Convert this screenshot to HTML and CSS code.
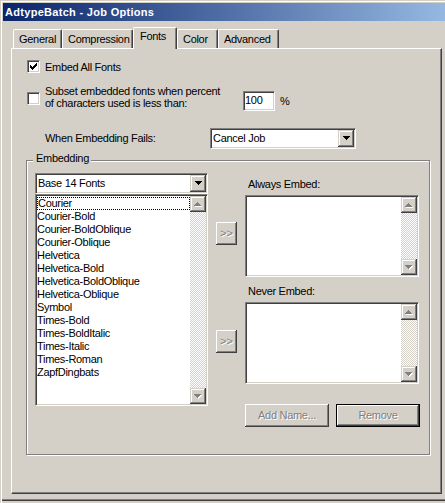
FILE: index.html
```html
<!DOCTYPE html>
<html>
<head>
<meta charset="utf-8">
<link rel="stylesheet" href="styles.css">
</head>
<body>
<div class="window">
  <div class="titlebar">AdtypeBatch - Job Options</div>
  <div class="client">
    <div class="tabs">
      <div class="tab t-general">General</div>
      <div class="tab t-compression">Compression</div>
      <div class="tab t-fonts sel">Fonts</div>
      <div class="tab t-color">Color</div>
      <div class="tab t-advanced">Advanced</div>
    </div>
    <div class="panel">
      <div class="row row1">
        <span class="checkbox"><svg class="check" width="7" height="7" viewBox="0 0 7 7" shape-rendering="crispEdges"><path d="M0 2h1v3H0zM1 3h1v3H1zM2 4h1v3H2zM3 3h1v3H3zM4 2h1v3H4zM5 1h1v3H5zM6 0h1v3H6z"/></svg></span>
        <span class="label">Embed All Fonts</span>
      </div>
      <div class="row row2">
        <span class="checkbox cb2"></span>
        <span class="label subset">Subset embedded fonts when percent<br>of characters used is less than:</span>
        <span class="edit">100</span>
        <span class="pct">%</span>
      </div>
      <div class="row row3">
        <span class="label fails">When Embedding Fails:</span>
        <div class="combo cancel">
          <span class="combo-text">Cancel Job</span>
          <span class="combo-btn"><svg width="7" height="4" viewBox="0 0 7 4" shape-rendering="crispEdges"><path d="M0 0h7v1H0zM1 1h5v1H1zM2 2h3v1H2zM3 3h1v1H3z"/></svg></span>
        </div>
      </div>
      <div class="group">
        <span class="legend">Embedding</span>
        <div class="group-body">
          <div class="col-left">
            <div class="combo base">
              <span class="combo-text">Base 14 Fonts</span>
              <span class="combo-btn"><svg width="7" height="4" viewBox="0 0 7 4" shape-rendering="crispEdges"><path d="M0 0h7v1H0zM1 1h5v1H1zM2 2h3v1H2zM3 3h1v1H3z"/></svg></span>
            </div>
            <div class="listbox fontlist">
              <ul class="items">
                <li class="focus">Courier</li>
                <li>Courier-Bold</li>
                <li>Courier-BoldOblique</li>
                <li>Courier-Oblique</li>
                <li>Helvetica</li>
                <li>Helvetica-Bold</li>
                <li>Helvetica-BoldOblique</li>
                <li>Helvetica-Oblique</li>
                <li>Symbol</li>
                <li>Times-Bold</li>
                <li>Times-BoldItalic</li>
                <li>Times-Italic</li>
                <li>Times-Roman</li>
                <li>ZapfDingbats</li>
              </ul>
              <div class="scrollbar">
                <span class="sbtn"><svg width="8" height="5" viewBox="0 0 8 5" shape-rendering="crispEdges"><path fill="#fff" d="M4 1h1v1H4zM3 2h3v1H3zM2 3h5v1H2zM1 4h7v1H1z"/><path fill="#808080" d="M3 0h1v1H3zM2 1h3v1H2zM1 2h5v1H1zM0 3h7v1H0z"/></svg></span>
                <span class="sbtn"><svg width="8" height="5" viewBox="0 0 8 5" shape-rendering="crispEdges"><path fill="#fff" d="M1 1h7v1H1zM2 2h5v1H2zM3 3h3v1H3zM4 4h1v1H4z"/><path fill="#808080" d="M0 0h7v1H0zM1 1h5v1H1zM2 2h3v1H2zM3 3h1v1H3z"/></svg></span>
              </div>
            </div>
          </div>
          <div class="col-mid">
            <div class="btn move m1">&gt;&gt;</div>
            <div class="btn move m2">&gt;&gt;</div>
          </div>
          <div class="col-right">
            <div class="caption">Always Embed:</div>
            <div class="listbox small">
              <div class="items"></div>
              <div class="scrollbar">
                <span class="sbtn"><svg width="8" height="5" viewBox="0 0 8 5" shape-rendering="crispEdges"><path fill="#fff" d="M4 1h1v1H4zM3 2h3v1H3zM2 3h5v1H2zM1 4h7v1H1z"/><path fill="#808080" d="M3 0h1v1H3zM2 1h3v1H2zM1 2h5v1H1zM0 3h7v1H0z"/></svg></span>
                <span class="sbtn"><svg width="8" height="5" viewBox="0 0 8 5" shape-rendering="crispEdges"><path fill="#fff" d="M1 1h7v1H1zM2 2h5v1H2zM3 3h3v1H3zM4 4h1v1H4z"/><path fill="#808080" d="M0 0h7v1H0zM1 1h5v1H1zM2 2h3v1H2zM3 3h1v1H3z"/></svg></span>
              </div>
            </div>
            <div class="caption cap2">Never Embed:</div>
            <div class="listbox small">
              <div class="items"></div>
              <div class="scrollbar">
                <span class="sbtn"><svg width="8" height="5" viewBox="0 0 8 5" shape-rendering="crispEdges"><path fill="#fff" d="M4 1h1v1H4zM3 2h3v1H3zM2 3h5v1H2zM1 4h7v1H1z"/><path fill="#808080" d="M3 0h1v1H3zM2 1h3v1H2zM1 2h5v1H1zM0 3h7v1H0z"/></svg></span>
                <span class="sbtn"><svg width="8" height="5" viewBox="0 0 8 5" shape-rendering="crispEdges"><path fill="#fff" d="M1 1h7v1H1zM2 2h5v1H2zM3 3h3v1H3zM4 4h1v1H4z"/><path fill="#808080" d="M0 0h7v1H0zM1 1h5v1H1zM2 2h3v1H2zM3 3h1v1H3z"/></svg></span>
              </div>
            </div>
            <div class="btnrow">
              <div class="btn push">Add Name...</div>
              <div class="btn push default">Remove</div>
            </div>
          </div>
        </div>
      </div>
    </div>
  </div>
</div>
</body>
</html>
```
FILE: styles.css
```css
* { box-sizing: border-box; }
html, body { margin: 0; padding: 0; background: #d4d0c8; }
body {
  font-family: "Liberation Sans", Arial, sans-serif;
  font-size: 11px;
  letter-spacing: -0.3px;
  color: #000;
  line-height: 13px;
}
.window {
  width: 445px;
  height: 503px;
  overflow: hidden;
  background: #d4d0c8;
  padding: 3px 0 0 3px;
  box-shadow: inset 1px 1px #d4d0c8, inset 2px 2px #fff,
              inset 0 -2px #d4d0c8, inset 0 -3px #404040, inset 0 -4px #808080;
}
.titlebar {
  height: 18px;
  line-height: 18px;
  padding-left: 2px;
  color: #fff;
  font-weight: bold;
  letter-spacing: 0.3px;
  background: linear-gradient(90deg, #0a246a 0%, #a6caf0 112%);
  white-space: nowrap;
}
.client { padding: 6px 0 0 8px; }
.tabs {
  display: flex;
  align-items: flex-end;
  height: 21px;
  padding-left: 2px;
  position: relative;
  z-index: 1;
}
.tab {
  height: 19px;
  border-left: 1px solid #fff;
  border-top: 1px solid #fff;
  border-right: 1px solid #404040;
  border-radius: 2px 2px 0 0;
  box-shadow: inset -1px 0 #808080;
  padding: 3px 0 0 5px;
  background: #d4d0c8;
  white-space: nowrap;
}
.tab.sel {
  height: 22px;
  margin-bottom: -1px;
  padding: 2px 0 0 6px;
}
.t-general { width: 49px; }
.t-compression { width: 71px; }
.t-fonts { width: 44px; }
.t-color { width: 41px; }
.t-advanced { width: 61px; }

.panel {
  width: 431px;
  height: 446px;
  border: 1px solid;
  border-color: #fff #404040 #404040 #fff;
  box-shadow: inset -1px -1px #808080;
  padding-left: 15px;
}
.row { display: flex; align-items: flex-start; }
.row1 { margin-top: 11px; height: 14px; }
.checkbox {
  width: 13px;
  height: 13px;
  flex: none;
  background: #fff;
  border: 1px solid;
  border-color: #808080 #fff #fff #808080;
  box-shadow: inset 1px 1px #404040, inset -1px -1px #d4d0c8;
}
.check { display: block; margin: 2px 0 0 2px; }
.row1 .label { margin-left: 5px; margin-top: 1px; }
.row2 { margin-top: 11px; }
.cb2 { margin-top: 7px; }
.subset { margin-left: 5px; width: 198px; line-height: 12px; flex: none; white-space: nowrap; }
.edit {
  margin-top: 6px;
  width: 32px;
  height: 20px;
  flex: none;
  background: #fff;
  border: 1px solid;
  border-color: #808080 #fff #fff #808080;
  box-shadow: inset 1px 1px #404040, inset -1px -1px #d4d0c8;
  padding-left: 1px;
  line-height: 15px;
  padding-top: 1px;
}
.pct { margin-left: 5px; margin-top: 10px; }
.row3 { margin-top: 17px; align-items: center; height: 21px; }
.fails { margin-left: 18px; width: 165px; flex: none; }

.combo {
  display: flex;
  height: 21px;
  background: #fff;
  border: 1px solid;
  border-color: #808080 #fff #fff #808080;
  box-shadow: inset 1px 1px #404040, inset -1px -1px #d4d0c8;
  padding: 1px;
}
.cancel { width: 146px; }
.base { width: 173px; }
.combo-text { flex: 1; padding-left: 1px; line-height: 15px; padding-top: 1px; white-space: nowrap; }
.combo-btn {
  width: 16px;
  height: 17px;
  flex: none;
  background: #d4d0c8;
  box-shadow: inset -1px -1px #404040, inset 1px 1px #d4d0c8, inset -2px -2px #808080, inset 2px 2px #fff;
  display: flex;
  align-items: center;
  justify-content: center;
  padding-bottom: 1px;
}
.combo-btn svg, .sbtn svg { display: block; }

.group {
  position: relative;
  margin-top: 11px;
  margin-left: -1px;
  width: 404px;
  height: 295px;
  border: 1px solid #808080;
  box-shadow: inset 1px 1px #fff, 1px 1px #fff;
}
.legend {
  position: absolute;
  top: -9px;
  left: 6px;
  padding: 0 2px 0 3px;
  background: #d4d0c8;
  line-height: 13px;
}
.group-body { display: flex; padding: 12px 0 0 8px; }
.col-left { width: 173px; flex: none; }
.listbox {
  display: flex;
  background: #fff;
  border: 1px solid;
  border-color: #808080 #fff #fff #808080;
  box-shadow: inset 1px 1px #404040, inset -1px -1px #d4d0c8;
  padding: 1px;
}
.fontlist { width: 173px; height: 212px; }
.small { width: 174px; height: 82px; }
.items {
  flex: 1;
  list-style: none;
  margin: 0;
  padding: 1px 0 0 0;
}
.items li { height: 13px; line-height: 13px; white-space: nowrap; }
.items li.focus { outline: 1px dotted #000; outline-offset: -1px; padding-left: 1px; }
.scrollbar {
  width: 16px;
  flex: none;
  display: flex;
  flex-direction: column;
  justify-content: space-between;
  background: repeating-conic-gradient(#d4d0c8 0 25%, #fff 0 50%) 0 0 / 2px 2px;
}
.sbtn {
  width: 16px;
  height: 16px;
  background: #d4d0c8;
  box-shadow: inset -1px -1px #404040, inset 1px 1px #d4d0c8, inset -2px -2px #808080, inset 2px 2px #fff;
  display: flex;
  align-items: center;
  justify-content: center;
}
.col-mid { width: 21px; margin-left: 8px; flex: none; }
.btn {
  background: #d4d0c8;
  box-shadow: inset -1px -1px #404040, inset 1px 1px #fff, inset -2px -2px #808080, inset 2px 2px #d4d0c8;
  color: #808080;
  text-shadow: 1px 1px #fff;
  text-align: center;
  white-space: nowrap;
}
.move { width: 21px; height: 23px; line-height: 22px; letter-spacing: 0; }
.m1 { margin-top: 49px; }
.m2 { margin-top: 85px; }
.col-right { width: 174px; margin-left: 8px; flex: none; }
.caption { margin-top: 5px; margin-bottom: 4px; padding-left: 3px; }
.cap2 { margin-top: 8px; }
.btnrow { display: flex; gap: 7px; margin-top: 20px; width: 175px; }
.push { width: 84px; height: 23px; line-height: 23px; flex: none; }
.default {
  border: 1px solid #000;
  line-height: 21px;
  box-shadow: inset -1px -1px #404040, inset 1px 1px #fff, inset -2px -2px #808080;
}
```
